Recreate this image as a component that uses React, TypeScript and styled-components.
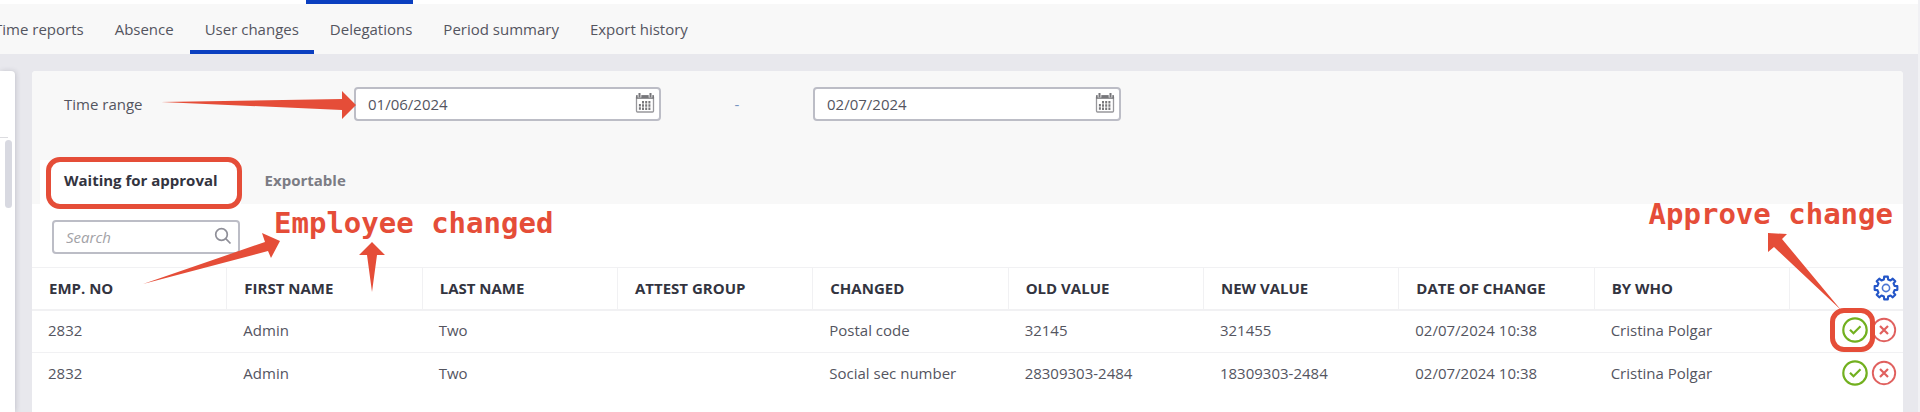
import React from 'react';
import styled, { createGlobalStyle } from 'styled-components';

const RED = '#e54d38';
const BLUE = '#0b3fc0';

const GlobalStyle = createGlobalStyle`
  *, *::before, *::after { box-sizing: border-box; }
  body {
    margin: 0;
    background: #e8e8ed;
    color: #54555f;
    font: 15px/20px "Open Sans", "Noto Sans", sans-serif;
    overflow: hidden;
  }
  button, input { font: inherit; color: inherit; }
  button { border: 0; background: none; padding: 0; cursor: pointer; }
`;

const Page = styled.div`
  display: flex;
  flex-direction: column;
  min-height: 100vh;
  border-right: 2px solid #f1f1f4;
`;

const TopStrip = styled.div`
  height: 4px;
  padding-left: 306px;
  background: #fff;
`;

const ActiveModule = styled.div`
  width: 107px;
  height: 4px;
  background: ${BLUE};
`;

const Nav = styled.nav`
  display: flex;
  gap: 1px;
  height: 50px;
  margin-left: -21px;
  background: #f8f8f8;
`;

const NavLink = styled.a<{ $active?: boolean }>`
  padding: 15px 15px 11px;
  border-bottom: 4px solid ${p => (p.$active ? BLUE : 'transparent')};
  color: inherit;
  text-decoration: none;
  white-space: nowrap;
`;

const Workspace = styled.main`
  flex: 1;
  display: flex;
  gap: 17px;
  padding: 17px 15px 0 0;
`;

const SidePanel = styled.aside`
  flex: 0 0 15px;
  padding-top: 66px;
  background: #fff;
  border-radius: 0 4px 0 0;
  box-shadow: 1px 0 5px rgba(60, 60, 80, 0.2);
`;

const SideRule = styled.div`
  height: 1px;
  width: 8px;
  background: #dcdce0;
`;

const ScrollThumb = styled.div`
  width: 7px;
  height: 68px;
  margin: 2px 0 0 5px;
  border-radius: 4px;
  background: #d8d9e1;
`;

const Panel = styled.section`
  flex: 1;
  position: relative;
  min-width: 0;
  background: #fff;
  border-radius: 4px 4px 0 0;
`;

const FilterArea = styled.div`
  padding: 16px 0 0 8px;
  background: #f8f8f8;
  border-radius: 4px 4px 0 0;
`;

const RangeRow = styled.div`
  display: flex;
  align-items: center;
  padding-left: 24px;
`;

const RangeLabel = styled.label`
  width: 290px;
`;

const Field = styled.div<{ $width: number }>`
  display: flex;
  align-items: center;
  width: ${p => p.$width}px;
  height: 34px;
  padding: 0 4px 2px 12px;
  border: 2px solid #bcbdc6;
  border-radius: 4px;
  background: #fff;
`;

const Input = styled.input`
  flex: 1;
  min-width: 0;
  padding: 2px 0 0;
  border: 0;
  outline: 0;
  background: none;
  &::placeholder { color: #a2a2a6; font-style: italic; opacity: 1; }
`;

const Dash = styled.span`
  width: 152px;
  text-align: center;
  color: #7795c0;
`;

const Tabs = styled.div`
  display: flex;
  height: 44px;
  margin-top: 39px;
`;

const Tab = styled.button<{ $active?: boolean }>`
  padding: 0 23px 4px 24px;
  background: ${p => (p.$active ? '#fff' : 'transparent')};
  color: ${p => (p.$active ? '#33343f' : '#7b7c84')};
  font-weight: 700;
`;

const Toolbar = styled.div`
  padding: 16px 20px 13px;
`;

const Table = styled.table`
  width: 100%;
  table-layout: fixed;
  border-collapse: separate;
  border-spacing: 0;
`;

const HeadCell = styled.th<{ $actions?: boolean }>`
  width: ${p => (p.$actions ? '113px' : 'auto')};
  height: 44px;
  padding: 0 ${p => (p.$actions ? 4 : 0)}px 2px 17px;
  border: solid #f1f1f3;
  border-width: 1px ${p => (p.$actions ? 0 : 1)}px 2px 0;
  color: #33343f;
  font-weight: 700;
  text-align: ${p => (p.$actions ? 'right' : 'left')};
`;

const Cell = styled.td`
  height: 42px;
  padding: 0 0 4px 16px;
  border-bottom: 1px solid #f1f1f3;
  tr:last-child > & { border-bottom: 0; padding-bottom: 2px; }
`;

const Actions = styled.div`
  display: flex;
  justify-content: flex-end;
  gap: 3px;
  padding-right: 6px;
`;

const IconButton = styled.button`
  display: inline-flex;
  vertical-align: middle;
`;

const Note = styled.div<{ $left?: number; $right?: number; $top: number }>`
  position: absolute;
  top: ${p => p.$top}px;
  left: ${p => (p.$left === undefined ? 'auto' : `${p.$left}px`)};
  right: ${p => (p.$right === undefined ? 'auto' : `${p.$right}px`)};
  color: ${RED};
  font: 700 29px/32px "DejaVu Sans Mono", monospace;
  white-space: nowrap;
`;

const Outline = styled.div<{ $left?: number; $right?: number; $top: number; $w: number; $h: number }>`
  position: absolute;
  top: ${p => p.$top}px;
  left: ${p => (p.$left === undefined ? 'auto' : `${p.$left}px`)};
  right: ${p => (p.$right === undefined ? 'auto' : `${p.$right}px`)};
  width: ${p => p.$w}px;
  height: ${p => p.$h}px;
  border: 5px solid ${RED};
  border-radius: 14px;
  pointer-events: none;
`;

const Arrow = styled.svg<{ $left?: number; $right?: number; $top: number }>`
  position: absolute;
  top: ${p => p.$top}px;
  left: ${p => (p.$left === undefined ? 'auto' : `${p.$left}px`)};
  right: ${p => (p.$right === undefined ? 'auto' : `${p.$right}px`)};
  fill: ${RED};
  pointer-events: none;
`;

const CalendarIcon = () => (
  <svg width="20" height="22" viewBox="0 0 20 22" fill="none">
    <rect x="1.5" y="4" width="17" height="16" rx="1" stroke="#98989c" strokeWidth="1.300" />
    <path d="M1 3.200h18v3.600H1z" fill="#77777b" />
    <path d="M4.500 0v5.500M15.500 0v5.500" stroke="#fff" strokeWidth="3.600" />
    <path d="M4.500 1v4.500M15.500 1v4.500" stroke="#77777b" strokeWidth="2" />
    <path d="M8 9v9M11.200 9v9M14.400 9v9M4.900 12v6" stroke="#77777b" strokeWidth="2" strokeDasharray="2.500 .7" />
  </svg>
);

const SearchIcon = () => (
  <svg width="20" height="18" viewBox="0 0 20 18" fill="none" stroke="#8f8f98" strokeWidth="1.700">
    <circle cx="7.500" cy="7.500" r="5.800" />
    <path d="M11.700 11.700 16.500 16.500" />
  </svg>
);

const gearPath = () => {
  const pts: string[] = [];
  const teeth = 8;
  for (let i = 0; i < teeth; i++) {
    const a = (i * 2 * Math.PI) / teeth - Math.PI / 2;
    [[-0.24, 8.8], [-0.16, 11.5], [0.16, 11.5], [0.24, 8.8]].forEach(([d, r]) => {
      pts.push(`${(13 + r * Math.cos(a + d)).toFixed(2)} ${(13 + r * Math.sin(a + d)).toFixed(2)}`);
    });
  }
  return `M${pts.join('L')}Z`;
};

const GearIcon = () => (
  <svg width="26" height="26" viewBox="0 0 26 26" fill="none" stroke="#2456c8" strokeWidth="2.100" strokeLinejoin="round">
    <path d={gearPath()} />
    <circle cx="13" cy="13" r="3.600" stroke="#4b76d4" strokeWidth="1.600" />
  </svg>
);

const ApproveIcon = () => (
  <svg width="26" height="26" viewBox="0 0 26 26" fill="none" stroke="#72b01f">
    <circle cx="13" cy="13" r="11.700" strokeWidth="2.200" />
    <path d="m8 12.800 3.500 3.400 7-7" strokeWidth="2.200" />
  </svg>
);

const RejectIcon = () => (
  <svg width="26" height="26" viewBox="0 0 26 26" fill="none" stroke="#e0605e">
    <circle cx="13" cy="13" r="11.200" strokeWidth="1.900" />
    <path d="m9 9 8 8m0-8-8 8" strokeWidth="2.200" />
  </svg>
);

const navItems = ['Time reports', 'Absence', 'User changes', 'Delegations', 'Period summary', 'Export history'];

const columns = [
  'EMP. NO', 'FIRST NAME', 'LAST NAME', 'ATTEST GROUP', 'CHANGED',
  'OLD VALUE', 'NEW VALUE', 'DATE OF CHANGE', 'BY WHO',
];

const rows = [
  ['2832', 'Admin', 'Two', '', 'Postal code', '32145', '321455', '02/07/2024 10:38', 'Cristina Polgar'],
  ['2832', 'Admin', 'Two', '', 'Social sec number', '28309303-2484', '18309303-2484', '02/07/2024 10:38', 'Cristina Polgar'],
];

export default function App() {
  return (
    <Page>
      <GlobalStyle />
      <TopStrip><ActiveModule /></TopStrip>
      <Nav>
        {navItems.map(item => (
          <NavLink key={item} href="#" $active={item === 'User changes'}>{item}</NavLink>
        ))}
      </Nav>
      <Workspace>
        <SidePanel>
          <SideRule />
          <ScrollThumb />
        </SidePanel>
        <Panel>
          <FilterArea>
            <RangeRow>
              <RangeLabel htmlFor="range-from">Time range</RangeLabel>
              <Field $width={307}>
                <Input id="range-from" defaultValue="01/06/2024" />
                <IconButton aria-label="Choose start date"><CalendarIcon /></IconButton>
              </Field>
              <Dash>-</Dash>
              <Field $width={308}>
                <Input aria-label="Time range end" defaultValue="02/07/2024" />
                <IconButton aria-label="Choose end date"><CalendarIcon /></IconButton>
              </Field>
            </RangeRow>
            <Tabs role="tablist">
              <Tab role="tab" aria-selected $active>Waiting for approval</Tab>
              <Tab role="tab" aria-selected={false}>Exportable</Tab>
            </Tabs>
          </FilterArea>
          <Toolbar>
            <Field $width={188}>
              <Input type="text" aria-label="Search" placeholder="Search" />
              <IconButton aria-label="Run search"><SearchIcon /></IconButton>
            </Field>
          </Toolbar>
          <Table>
            <thead>
              <tr>
                {columns.map(c => <HeadCell key={c} scope="col">{c}</HeadCell>)}
                <HeadCell $actions>
                  <IconButton aria-label="Table settings"><GearIcon /></IconButton>
                </HeadCell>
              </tr>
            </thead>
            <tbody>
              {rows.map((row, r) => (
                <tr key={r}>
                  {row.map((value, c) => <Cell key={c}>{value}</Cell>)}
                  <Cell>
                    <Actions>
                      <IconButton aria-label="Approve"><ApproveIcon /></IconButton>
                      <IconButton aria-label="Reject"><RejectIcon /></IconButton>
                    </Actions>
                  </Cell>
                </tr>
              ))}
            </tbody>
          </Table>

          <Outline $left={14} $top={86} $w={196} $h={52} />
          <Arrow $left={129} $top={20} width="195" height="28" viewBox="0 0 195 28">
            <path d="M0 11 181 8V0l14 14-14 14v-9Z" />
          </Arrow>
          <Arrow $left={111} $top={162} width="137" height="52" viewBox="0 0 137 52">
            <path d="M0 51 122 9 119 0 137 8 128 25 125 18Z" />
          </Arrow>
          <Arrow $left={327} $top={171} width="26" height="50" viewBox="0 0 26 50">
            <path d="M13 0 26 13h-8L13 50 8 13H0Z" />
          </Arrow>
          <Note $left={242} $top={136}>Employee changed</Note>
          <Note $right={10} $top={127}>Approve change</Note>
          <Arrow $right={62} $top={162} width="73" height="77" viewBox="0 0 73 77">
            <path d="M0 0 19 1 14 6 73 77 6 14 0 19Z" />
          </Arrow>
          <Outline $right={28} $top={237} $w={45} $h={44} />
        </Panel>
      </Workspace>
    </Page>
  );
}
